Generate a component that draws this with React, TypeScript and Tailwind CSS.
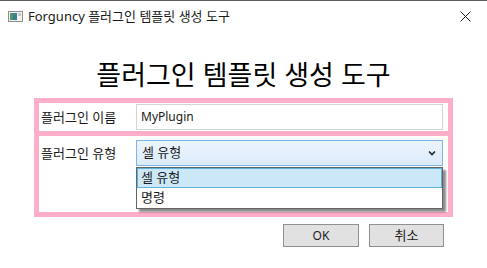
import React from 'react';

const font = { fontFamily: '"Noto Sans", "Noto Sans CJK KR", sans-serif' };

function AppIcon() {
  return (
    <svg width="15" height="11" viewBox="0 0 15 11">
      <rect x="0.5" y="0.5" width="14" height="10" fill="#f4f4f4" stroke="#8c8c8c" />
      <rect x="2" y="2" width="7" height="7" fill="#3d7f8c" />
      <rect x="2" y="2" width="3" height="7" fill="#4a9a6a" />
      <rect x="10" y="2" width="3" height="3" fill="#c9c9c9" />
    </svg>
  );
}

function CloseIcon() {
  return (
    <svg width="11" height="11" viewBox="0 0 11 11">
      <path d="M0.5 0.5 L10.5 10.5 M10.5 0.5 L0.5 10.5" stroke="#1a1a1a" strokeWidth="1" fill="none" />
    </svg>
  );
}

function Chevron() {
  return (
    <svg width="8" height="6" viewBox="0 0 8 6">
      <path d="M1 1.5 L4 4.5 L7 1.5" stroke="#222" strokeWidth="1.6" fill="none" />
    </svg>
  );
}

export default function App() {
  return (
    <div className="w-[487px] h-[268px] bg-white text-[#1a1a1a] overflow-hidden" style={font}>
      {/* title bar */}
      <div className="h-[32px] border-t border-[#5c5c5c] flex items-center pl-[8px] pr-[16px]">
        <AppIcon />
        <span className="ml-[5px] text-[13px] leading-none text-[#1a1a1a]">Forguncy 플러그인 템플릿 생성 도구</span>
        <span className="ml-auto flex items-center">
          <CloseIcon />
        </span>
      </div>

      {/* heading */}
      <div className="h-[66px] flex items-center justify-center pt-[18px]">
        <h1 className="text-[27px] leading-none text-black">플러그인 템플릿 생성 도구</h1>
      </div>

      {/* form frame */}
      <div className="ml-[34px] w-[419px] border-[5px] border-[#ffaec9] flex flex-col">
        <div className="h-[28px] flex items-center pr-[5px] border-b-[5px] border-[#ffaec9] box-content">
          <span className="w-[97px] pl-[2px] text-[13px] leading-none">플러그인 이름</span>
          <div className="flex-1 h-[26px] border border-[#d4d4d4] flex items-center pl-[4px] text-[12px]">
            MyPlugin
          </div>
        </div>
        <div className="h-[76px] relative pr-[5px] pt-[4px] flex items-start">
          <span className="w-[97px] pl-[2px] text-[13px] leading-none mt-[7px]">플러그인 유형</span>
          <div className="flex-1 flex flex-col relative">
            <div className="h-[26px] border border-[#7eb4ea] bg-gradient-to-b from-[#ecf4fc] to-[#dcecfc] flex items-center pl-[5px] pr-[6px] text-[13px]">
              <span>셀 유형</span>
              <span className="ml-auto flex items-center">
                <Chevron />
              </span>
            </div>
            <div className="absolute left-0 top-[27px] w-full bg-white border border-[#646464] shadow-[3px_3px_2px_rgba(0,0,0,0.45)] text-[13px]">
              <div className="h-[20px] bg-[#cce8f6] border border-[#5fb1e0] flex items-center pl-[3px]">셀 유형</div>
              <div className="h-[20px] flex items-center pl-[4px]">명령</div>
            </div>
          </div>
        </div>
      </div>

      {/* buttons */}
      <div className="flex justify-end gap-[10px] mt-[7px] pr-[43px]">
        <button className="w-[76px] h-[23px] bg-[#e1e1e1] border border-[#8f8f8f] text-[12px] leading-none">OK</button>
        <button className="w-[75px] h-[23px] bg-[#e1e1e1] border border-[#8f8f8f] text-[13px] leading-none">취소</button>
      </div>
    </div>
  );
}
